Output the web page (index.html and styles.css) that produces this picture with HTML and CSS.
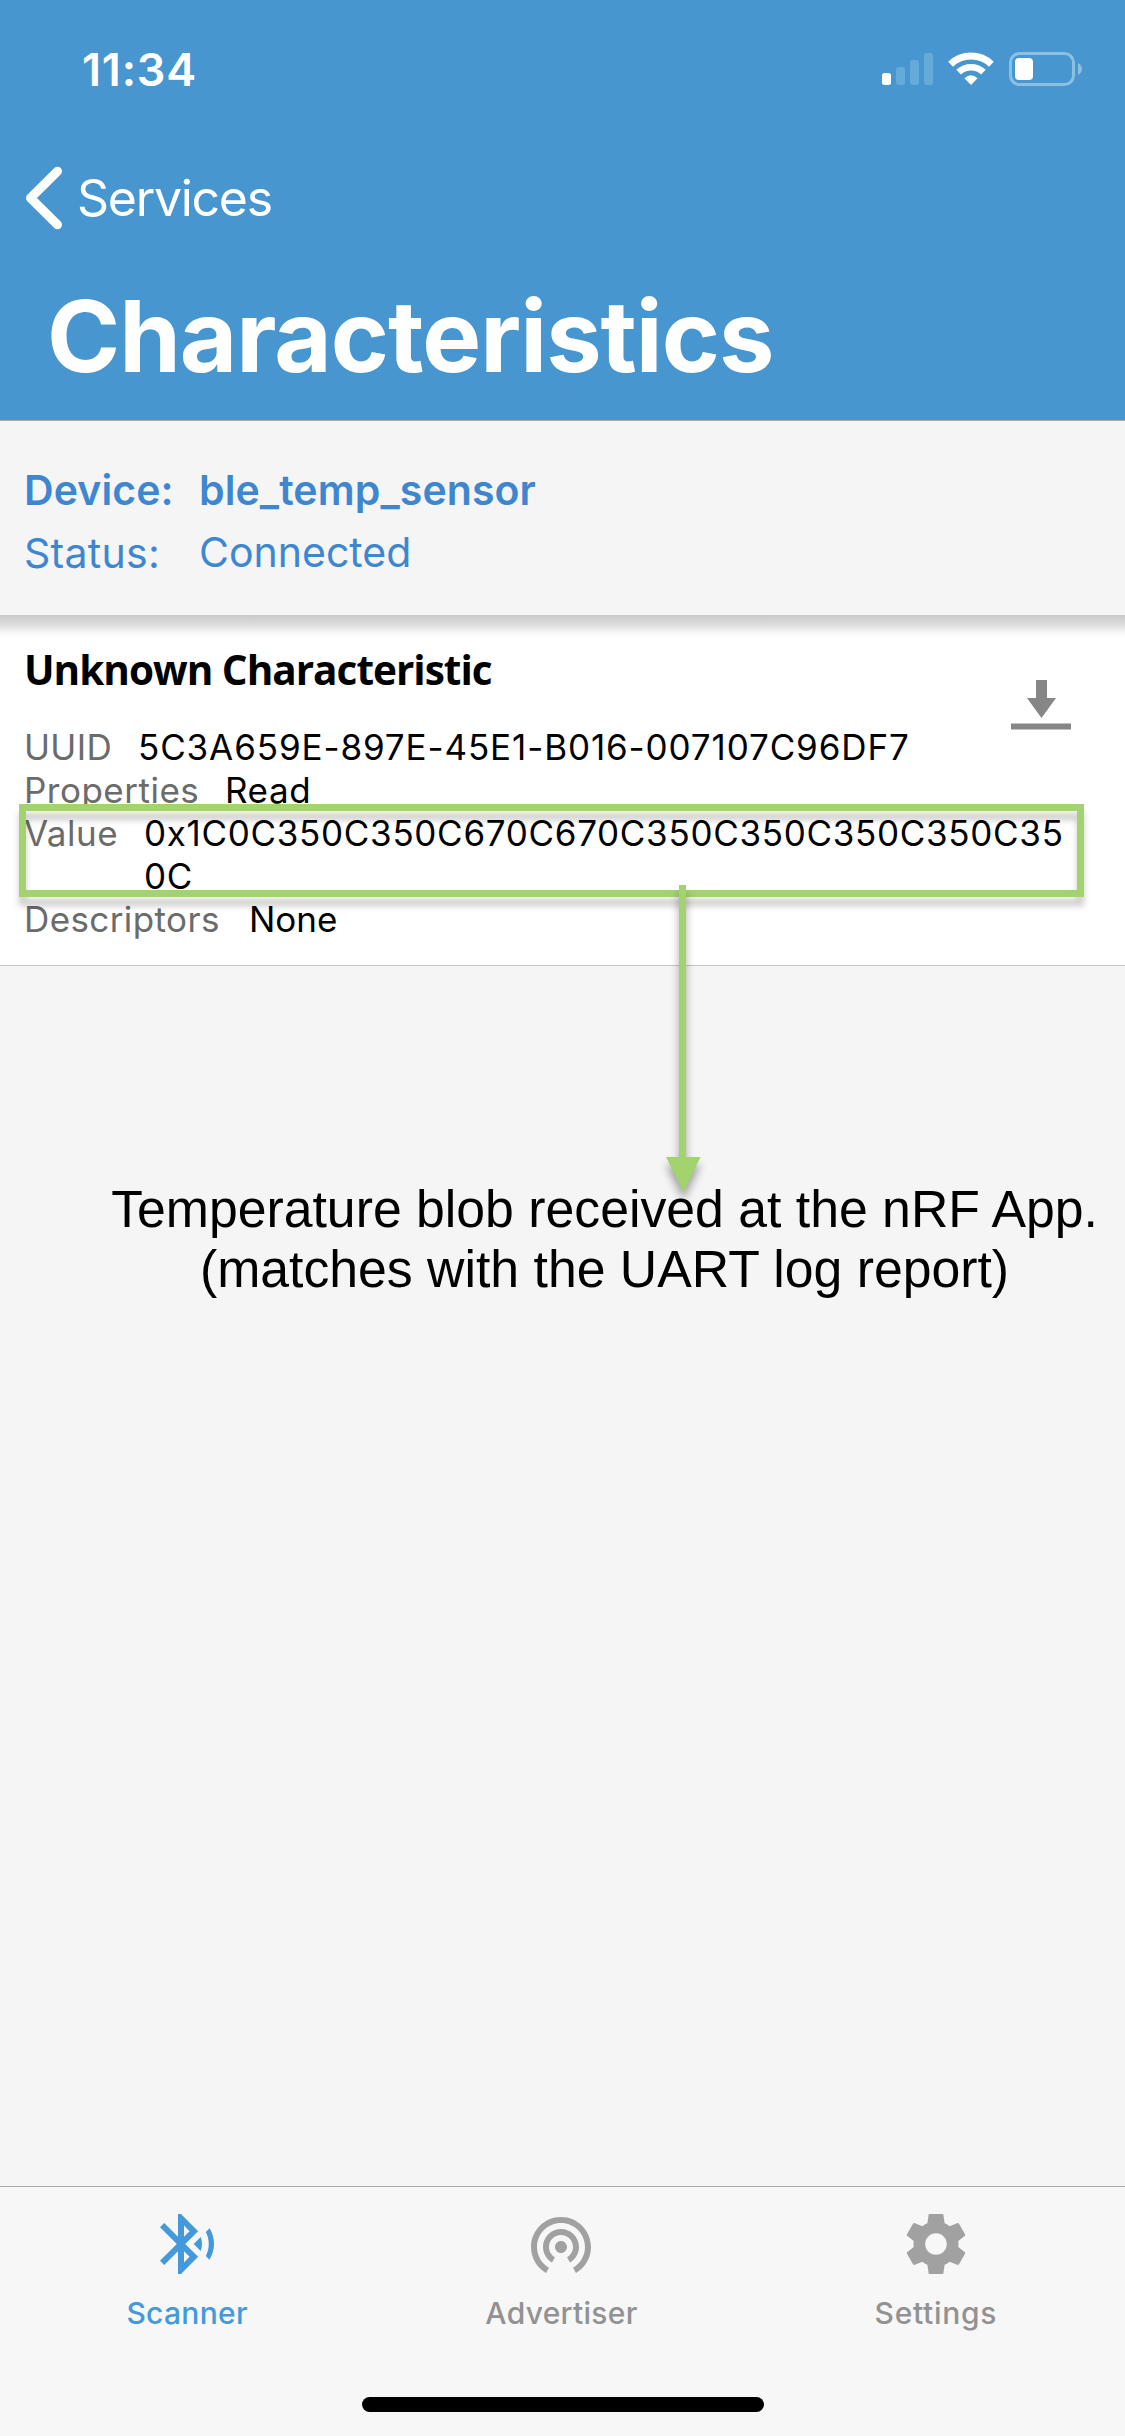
FILE: index.html
```html
<!DOCTYPE html>
<html lang="en">
<head>
<meta charset="utf-8">
<title>Characteristics</title>
<link rel="stylesheet" href="styles.css">
</head>
<body>
<div class="screen">
  <header class="header">
    <div class="status-bar">
      <span class="time">11:34</span>
      <svg class="status-icons" width="202" height="36" viewBox="881 51 202 36" aria-hidden="true">
        <rect x="882" y="73" width="9" height="12" rx="2.5" fill="#fff"/>
        <g fill="#65abd9">
          <rect x="896" y="67" width="9" height="18" rx="2.5"/>
          <rect x="910" y="60" width="9" height="25" rx="2.5"/>
          <rect x="924" y="53" width="9" height="32" rx="2.5"/>
        </g>
        <g fill="none" stroke="#fff" stroke-width="7">
          <path d="M950.6 64.3A29.5 29.5 0 0 1 991.4 64.3"/>
          <path d="M958.6 72.2A18 18 0 0 1 983.4 72.2" stroke-width="6.6"/>
        </g>
        <path d="M971 85L964.4 78.2Q971 72.4 977.6 78.2Z" fill="#fff"/>
        <rect x="1010.5" y="53.5" width="63" height="31" rx="9" fill="none" stroke="#8cc0e2" stroke-width="3"/>
        <rect x="1015" y="58" width="18" height="22" rx="4" fill="#fff"/>
        <path d="M1078 63Q1082 65.5 1082 69T1078 75Z" fill="#8cc0e2"/>
      </svg>
    </div>
    <nav class="nav">
      <svg class="chevron" width="38" height="64" viewBox="0 0 38 64" aria-hidden="true"><path d="M32.500 5.200L5.500 32L32.500 58.800" fill="none" stroke="#fff" stroke-width="9" stroke-linecap="round" stroke-linejoin="round"/></svg>
      <span class="back">Services</span>
    </nav>
    <h1 class="title">Characteristics</h1>
  </header>

  <section class="device">
    <div class="device-row device-name"><span class="key">Device:</span><span>ble_temp_sensor</span></div>
    <div class="device-row device-status"><span class="key">Status:</span><span class="state">Connected</span></div>
  </section>

  <section class="card">
    <div class="card-head">
      <h2 class="card-title">Unknown Characteristic</h2>
      <svg class="download" width="60" height="50" viewBox="0 0 60 50" fill="#868686" aria-hidden="true"><path d="M25 0h11v18h9L30.500 38 16 18h9z"/><path d="M0 43.500h60v6H0z"/></svg>
    </div>
    <dl class="details">
      <div class="detail uuid"><dt>UUID</dt><dd>5C3A659E-897E-45E1-B016-007107C96DF7</dd></div>
      <div class="detail properties"><dt>Properties</dt><dd>Read</dd></div>
      <div class="detail value"><dt>Value</dt><dd>0x1C0C350C350C670C670C350C350C350C350C350C</dd></div>
      <div class="detail descriptors"><dt>Descriptors</dt><dd>None</dd></div>
    </dl>
    <div class="highlight"></div>
    <svg class="arrow" width="40" height="320" viewBox="0 0 40 320" aria-hidden="true"><path d="M16 0h7v272H37.500L20.500 307 3 272h13z" fill="#a3d36f"/></svg>
  </section>

  <main class="content">
    <p class="caption">Temperature blob received at the nRF App.<br>(matches with the UART log report)</p>
  </main>

  <nav class="tabs">
    <div class="tab active">
      <svg width="72" height="72" viewBox="0 0 24 24" fill="currentColor" aria-hidden="true"><path d="M14.240 12.010l2.320 2.320c.28-.72.44-1.510.44-2.330 0-.82-.16-1.590-.43-2.310l-2.330 2.320zm5.290-5.300l-1.260 1.260c.63 1.210.98 2.570.98 4.020s-.36 2.820-.98 4.020l1.200 1.200c.97-1.540 1.540-3.360 1.540-5.310-.01-1.890-.55-3.670-1.480-5.190zm-3.820 1L10 2H9v7.590L4.410 5 3 6.410 8.590 12 3 17.590 4.410 19 9 14.410V22h1l5.710-5.710-4.300-4.290 4.300-4.290zM11 5.830l1.880 1.880L11 9.590V5.830zm1.880 10.460L11 18.170v-3.760l1.880 1.880z"/></svg>
      <span>Scanner</span>
    </div>
    <div class="tab">
      <svg width="72" height="72" viewBox="0 0 24 24" fill="#a1a1a1" aria-hidden="true"><path d="M12 11c-1.100 0-2 .9-2 2s.9 2 2 2 2-.9 2-2-.9-2-2-2zm6 2c0-3.310-2.690-6-6-6s-6 2.690-6 6c0 2.220 1.210 4.150 3 5.190l1-1.740c-1.190-.7-2-1.970-2-3.450 0-2.210 1.790-4 4-4s4 1.790 4 4c0 1.480-.81 2.750-2 3.450l1 1.740c1.790-1.040 3-2.970 3-5.190zM12 3C6.480 3 2 7.480 2 13c0 3.700 2.010 6.920 4.990 8.650l1-1.730C5.610 18.530 4 15.960 4 13c0-4.420 3.580-8 8-8s8 3.580 8 8c0 2.960-1.610 5.530-4 6.920l1 1.730c2.990-1.730 5-4.950 5-8.650 0-5.520-4.480-10-10-10z"/></svg>
      <span>Advertiser</span>
    </div>
    <div class="tab settings">
      <svg width="72" height="72" viewBox="0 0 24 24" fill="#a1a1a1" aria-hidden="true"><path d="M19.430 12.980c.04-.32.07-.64.07-.98s-.03-.66-.07-.98l2.110-1.650c.19-.15.24-.42.12-.64l-2-3.460c-.12-.22-.39-.3-.61-.22l-2.490 1c-.52-.4-1.080-.73-1.690-.98l-.38-2.650C14.460 2.180 14.250 2 14 2h-4c-.25 0-.46.18-.49.42l-.38 2.650c-.61.25-1.170.59-1.690.98l-2.490-1c-.23-.09-.49 0-.61.22l-2 3.460c-.13.22-.07.49.12.64l2.110 1.650c-.04.32-.07.65-.07.98s.03.66.07.98l-2.110 1.650c-.19.15-.24.42-.12.64l2 3.460c.12.22.39.3.61.22l2.490-1c.52.4 1.080.73 1.690.98l.38 2.650c.03.24.24.42.49.42h4c.25 0 .46-.18.49-.42l.38-2.650c.61-.25 1.170-.59 1.690-.98l2.490 1c.23.09.49 0 .61-.22l2-3.460c.12-.22.07-.49-.12-.64l-2.110-1.650zM12 15.600c-1.980 0-3.600-1.620-3.600-3.600s1.620-3.600 3.600-3.600 3.600 1.620 3.600 3.600-1.620 3.600-3.600 3.600z"/></svg>
      <span>Settings</span>
    </div>
    <div class="home-indicator"></div>
  </nav>
</div>
</body>
</html>
```
FILE: styles.css
```css
* {
  box-sizing: border-box;
  margin: 0;
  padding: 0;
}

body {
  background: #f5f5f5;
  color: #000;
  font-family: Inter, "Liberation Sans", sans-serif;
}

.screen {
  display: flex;
  flex-direction: column;
  width: 1125px;
  height: 2436px;
  overflow: hidden;
}

/* Header */
.header {
  height: 421px;
  background: #4796d0;
  border-bottom: 1px solid #a9a9a9;
  color: #fff;
}

.status-bar {
  display: flex;
  align-items: center;
  justify-content: space-between;
  height: 138px;
  padding: 0 42px 0 82px;
}

.time {
  font-size: 45px;
  font-weight: 600;
  letter-spacing: 0.8px;
}

.nav {
  display: flex;
  align-items: center;
  gap: 14px;
  height: 120px;
  padding-left: 25px;
}

.back {
  font-size: 50px;
  letter-spacing: -1.3px;
}

.title {
  padding-left: 47px;
  font-size: 99px;
  font-weight: 700;
  line-height: 156px;
  letter-spacing: -1px;
}

/* Connected device */
.device {
  height: 194px;
  padding: 38px 24px 0;
  color: #3e87d0;
  font-size: 41px;
  line-height: 62px;
}

.device-row {
  display: flex;
}

.key {
  width: 175px;
}

.device-name {
  font-weight: 600;
  letter-spacing: 0.1px;
}

.device-status .key {
  padding-top: 1px;
  letter-spacing: 0.3px;
}

/* Characteristic card */
.card {
  position: relative;
  height: 351px;
  padding: 24px 54px 0 24px;
  background: linear-gradient(#c9c9c9, #dedede 10px, #f6f6f6 17px, #fff 22px);
  border-bottom: 1px solid #c4c6c6;
}

.card-head {
  display: flex;
  justify-content: space-between;
  height: 87px;
}

.card-title {
  font-family: "Open Sans", "Noto Sans", sans-serif;
  font-size: 40.5px;
  font-weight: 700;
  line-height: 61px;
  letter-spacing: -1px;
}

.download {
  flex: none;
  margin-top: 41px;
}

.details {
  font-size: 35px;
  line-height: 43px;
}

.detail {
  display: flex;
}

dt {
  flex: none;
  color: #6b6b6b;
  letter-spacing: 0.5px;
}

.uuid dt {
  width: 114px;
  letter-spacing: 0.3px;
}

.uuid dd {
  letter-spacing: 0.886px;
}

.properties dt {
  width: 201px;
}

.properties dd {
  letter-spacing: 0.6px;
}

.value dt {
  width: 120px;
}

.value dd {
  width: 930px;
  letter-spacing: 0.69px;
  word-break: break-all;
}

.descriptors dt {
  width: 225px;
  letter-spacing: 0.4px;
}

/* Annotation drawn over the card */
.highlight {
  position: absolute;
  top: 189px;
  left: 19px;
  width: 1065px;
  height: 93px;
  border: 7px solid #a3d36f;
  filter: drop-shadow(0 9px 3px rgba(0, 0, 0, 0.2));
}

.arrow {
  position: absolute;
  top: 270px;
  left: 663px;
  overflow: visible;
  filter: drop-shadow(0 8px 4px rgba(0, 0, 0, 0.35));
}

.content {
  flex: 1;
  padding: 213px 0 0 84px;
}

.caption {
  position: relative;
  font-family: "Liberation Sans", Arial, sans-serif;
  font-size: 51.75px;
  line-height: 60px;
  text-align: center;
  white-space: nowrap;
}

/* Tab bar */
.tabs {
  position: relative;
  display: grid;
  grid-template-columns: repeat(3, 1fr);
  height: 250px;
  padding-right: 2px;
  background: #f7f7f7;
  border-top: 1px solid #a9a9a9;
}

.tab {
  display: flex;
  flex-direction: column;
  align-items: center;
  padding-top: 21px;
  color: #929292;
  font-size: 30px;
  font-weight: 500;
  line-height: 40px;
  letter-spacing: 0.3px;
}

.tab span {
  margin-top: 13px;
}

.tab.active {
  color: #4399db;
}

.tab.settings {
  letter-spacing: 0.7px;
}

.home-indicator {
  position: absolute;
  left: 362px;
  bottom: 24px;
  width: 402px;
  height: 15px;
  border-radius: 8px;
  background: #000;
}
```
